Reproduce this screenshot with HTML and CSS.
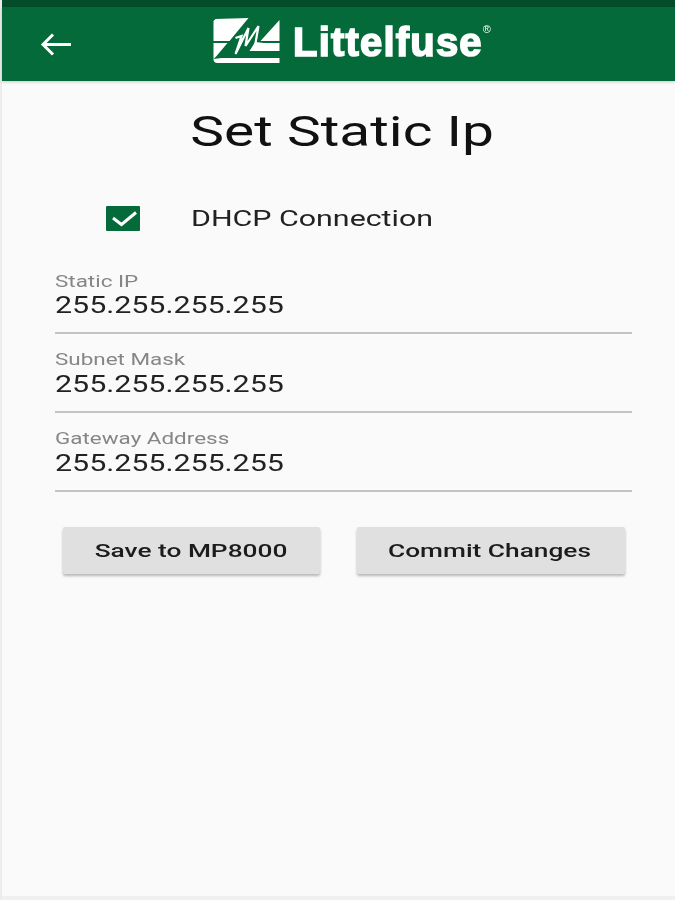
FILE: index.html
```html
<!DOCTYPE html>
<html lang="en">
<head>
<meta charset="utf-8">
<title>Set Static Ip</title>
<link rel="stylesheet" href="styles.css">
</head>
<body>
<div class="app">
  <div class="statusbar"></div>
  <header class="toolbar">
    <svg class="back" width="34" height="24" viewBox="0 0 34 24" aria-label="Back">
      <path d="M33 12.500H5M15 2.500 5 12.500 15 22.500" fill="none" stroke="#fff" stroke-width="3"/>
    </svg>
    <div class="logo">
      <svg class="logo-mark" width="67" height="45" viewBox="0 0 66 45">
        <path fill="#fff" d="M2 1 35 0 16 23H0V3ZM66 2V23H47ZM0 25H14L3 38 0 41ZM41 25H66V33H36ZM8 40H66V45H4Q0 45 0 41Z"/>
        <path fill="none" stroke="#fff" stroke-width="2.200" d="M22 20 28 18 22 36 35 10 32 28 45 8 42 25 50 26"/>
      </svg>
      <span class="logo-text">Littelfuse</span><span class="logo-reg">®</span>
    </div>
  </header>
  <main class="content">
    <h1 class="title"><span class="wide">Set Static Ip</span></h1>
    <label class="dhcp">
      <span class="check">
        <svg width="34" height="25" viewBox="0 0 34 25"><path d="M7 12 15.500 18.500 30 6.500" fill="none" stroke="#fff" stroke-width="3"/></svg>
      </span>
      <span class="dhcp-label"><span class="wide-left">DHCP Connection</span></span>
    </label>
    <div class="field">
      <div class="field-label"><span class="wide-left">Static IP</span></div>
      <div class="field-value"><span class="wide-left">255.255.255.255</span></div>
    </div>
    <div class="field">
      <div class="field-label"><span class="wide-left">Subnet Mask</span></div>
      <div class="field-value"><span class="wide-left">255.255.255.255</span></div>
    </div>
    <div class="field">
      <div class="field-label"><span class="wide-left">Gateway Address</span></div>
      <div class="field-value"><span class="wide-left">255.255.255.255</span></div>
    </div>
    <div class="actions">
      <button class="btn btn-save" type="button"><span class="wide-btn">Save to MP8000</span></button>
      <button class="btn btn-commit" type="button"><span class="wide-btn">Commit Changes</span></button>
    </div>
  </main>
  <div class="navbar-edge"></div>
</div>
</body>
</html>
```
FILE: styles.css
```css
* { box-sizing: border-box; }
html, body { margin: 0; height: 100%; }
body { background: #ececec; font-family: Roboto, "Liberation Sans", sans-serif; overflow: hidden; }
.app { height: 900px; margin-left: 2px; display: flex; flex-direction: column; background: #fafafa; filter: blur(.5px); }
.statusbar { height: 7px; background: #044d2b; flex: none; }
.toolbar { height: 74px; flex: none; background: #046a3a; display: flex; align-items: center; padding-left: 36px; justify-content: flex-start; box-shadow: 0 1px 3px rgba(0,0,0,.2); z-index: 1; }
.back { flex: none; }
.logo { display: flex; align-items: center; color: #fff; margin-left: 141px; margin-top: -7px; }
.logo-mark { flex: none; margin-right: 13px; }
.logo-text { font: bold 40px/34px "Liberation Sans", sans-serif; -webkit-text-stroke: 1.6px #fff; letter-spacing: 1.2px; margin-top: 3px; }
.logo-reg { font: 11px/12px "Liberation Sans", sans-serif; align-self: flex-start; margin: 5px 0 0 0; }
.content { flex: 1; display: flex; flex-direction: column; padding: 0 43px 0 53px; }
.title { margin: 24px 0 0 -3px; font-size: 42px; font-weight: 400; line-height: 54px; text-align: center; color: #111; }
.wide { display: inline-block; transform: scaleX(1.354); white-space: nowrap; }
.wide-btn { display: inline-block; transform: scaleX(1.46); white-space: nowrap; }
.wide-left { display: inline-block; transform: scaleX(1.32); transform-origin: left center; white-space: nowrap; }
.dhcp { display: flex; align-items: center; margin-top: 43px; height: 32px; }
.check { width: 34px; height: 25px; background: #046a3a; border-radius: 1px; margin-left: 51px; flex: none; display: block; }
.check svg { display: block; }
.dhcp-label { margin-left: 51px; font-size: 22px; color: #222; }
.dhcp-label .wide-left { transform: scaleX(1.38); }
.field { border-bottom: 2px solid #c4c4c4; height: 79px; }
.dhcp + .field { margin-top: 19px; height: 81px; padding-top: 3px; }
.field-label { font-size: 17px; line-height: 20px; color: #868686; padding-top: 15px; height: 36px; }
.field-value { font-size: 23px; line-height: 30px; color: #222; }
.dhcp + .field .field-label { height: 35px; }
.actions { display: flex; justify-content: space-between; margin-top: 35px; padding: 0 7px 0 8px; }
.btn { height: 47px; border: 0; border-radius: 2px; background: #e0e0e0; color: #1c1c1c; font: 500 18px Roboto, sans-serif; box-shadow: 0 2px 3px rgba(0,0,0,.28); padding: 0; }
.btn-save { width: 257px; }
.btn-commit { width: 268px; padding-right: 4px; }
.navbar-edge { height: 4px; background: #f0f0f0; flex: none; }
```
